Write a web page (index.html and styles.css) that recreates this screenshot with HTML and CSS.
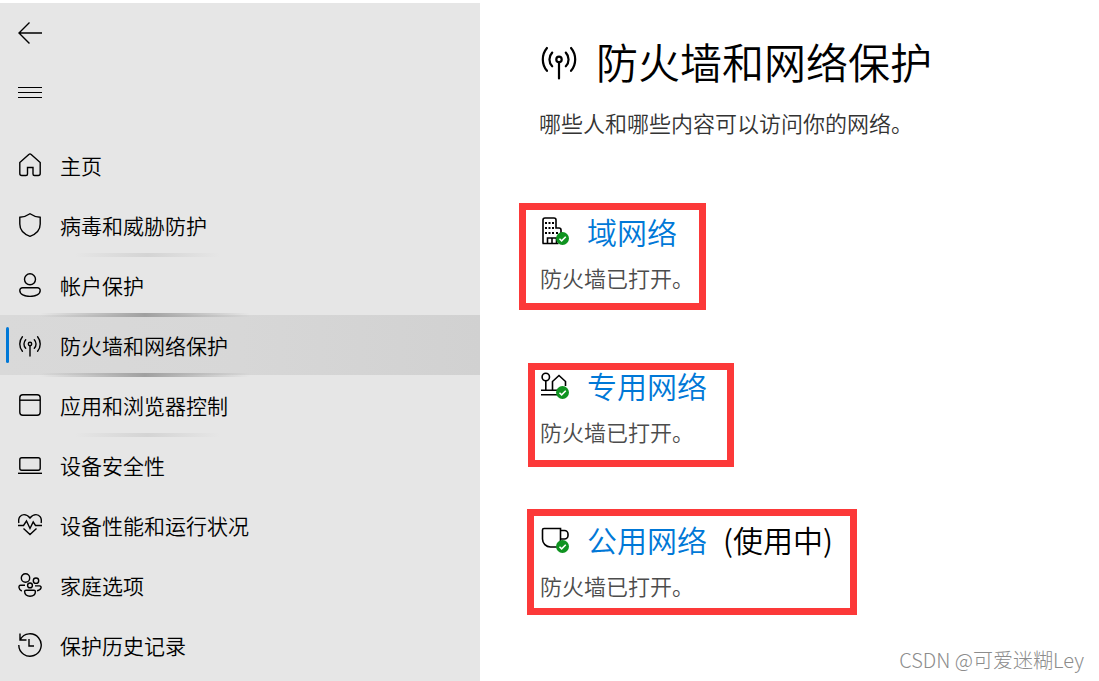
FILE: index.html
```html
<!DOCTYPE html>
<html lang="zh-CN">
<head>
    <meta charset="utf-8">
    <meta name="viewport" content="width=device-width, initial-scale=1.0">
    <title>防火墙和网络保护</title>
    <link rel="stylesheet" href="styles.css">
</head>
<body>
    <svg class="defs" width="0" height="0">
        <symbol id="antenna" viewBox="0 0 24 24">
            <circle cx="12" cy="11" r="1.700"/>
            <path stroke-linecap="round" d="M12 12.700V23M7.700 6.700a6.200 6.200 0 0 0 0 8.600M16.300 6.700a6.200 6.200 0 0 1 0 8.600M4.400 3.800a11.200 11.200 0 0 0 0 14.400M19.600 3.800a11.200 11.200 0 0 1 0 14.400"/>
        </symbol>
        <symbol id="check" viewBox="0 0 12 12">
            <circle cx="6" cy="6" r="6" fill="#0f9320" stroke="none"/>
            <path d="M3.200 6.200l2 2L9 4.300" stroke="#fff" stroke-width="1.400"/>
        </symbol>
    </svg>

    <div class="app">
        <aside class="sidebar">
            <button class="tool" type="button" aria-label="返回">
                <svg class="icon" viewBox="0 0 24 24"><path d="M24 12H1M11.500 1.500L1 12l10.500 10.500"/></svg>
            </button>
            <button class="tool" type="button" aria-label="菜单">
                <svg class="icon" viewBox="0 0 24 24"><path d="M0 6.500h24M0 11.500h24M0 16.500h24" stroke-width="1"/></svg>
            </button>

            <nav class="nav">
                <a class="nav-item" href="#">
                    <svg class="icon" viewBox="0 0 24 24"><path d="M1.800 9.500L10.800 1.400a1.800 1.800 0 0 1 2.400 0L22.200 9.500V20.500a2 2 0 0 1-2 2H16.500a1.500 1.500 0 0 1-1.500-1.500V14.500H9.500V21a1.500 1.500 0 0 1-1.500 1.500H3.800a2 2 0 0 1-2-2z"/></svg>
                    <span>主页</span>
                </a>
                <a class="nav-item faint" href="#">
                    <svg class="icon" viewBox="0 0 24 24"><path d="M12 .8C9.200 2.800 5.500 4 1.800 4.300V11c0 6 3.800 10 10.200 12.300C18.400 21 22.200 17 22.200 11V4.300C18.500 4 14.800 2.800 12 .8z"/></svg>
                    <span>病毒和威胁防护</span>
                </a>
                <a class="nav-item" href="#">
                    <svg class="icon" viewBox="0 0 24 24"><circle cx="12" cy="6.300" r="5.500"/><path d="M4.500 14.700h15a2.700 2.700 0 0 1 2.700 2.700c0 3.800-4.600 6-10.200 6S1.800 21.200 1.800 17.400a2.700 2.700 0 0 1 2.700-2.700z"/></svg>
                    <span>帐户保护</span>
                </a>
                <a class="nav-item active" href="#">
                    <svg class="icon"><use href="#antenna"/></svg>
                    <span>防火墙和网络保护</span>
                </a>
                <a class="nav-item faint" href="#">
                    <svg class="icon" viewBox="0 0 24 24"><rect x="1.800" y="1.800" width="20.400" height="20.400" rx="3"/><path d="M1.800 7.200h20.400"/></svg>
                    <span>应用和浏览器控制</span>
                </a>
                <a class="nav-item" href="#">
                    <svg class="icon" viewBox="0 0 24 24"><rect x="1.800" y="4.800" width="20.400" height="12.400" rx="2"/><path d="M0 20.300h24"/></svg>
                    <span>设备安全性</span>
                </a>
                <a class="nav-item" href="#">
                    <svg class="icon" viewBox="0 0 24 24"><path d="M.9 10C-.2 5 2.500 1.600 6 1.600c2.800 0 4.500 1.400 6 3.400 1.500-2 3.200-3.400 6-3.400 3.500 0 6.200 3.400 5.100 8.400M0 12.500h5.500l3-4.500 3.500 7.500 3.200-6.500 2.300 3.500H24M5.500 15.500L12 21.500l6.500-6"/></svg>
                    <span>设备性能和运行状况</span>
                </a>
                <a class="nav-item" href="#">
                    <svg class="icon" viewBox="0 0 24 24"><circle cx="7.500" cy="5" r="4.200"/><circle cx="18" cy="7.700" r="2.700"/><circle cx="12" cy="12.400" r="2.400"/><path d="M7 12.300H2.500C.3 12.300.3 16.500 3.800 18M17 12.900h4.500c2.600 0 2.200 4-2.500 4.800M8 17.200h8a1.400 1.400 0 0 1 1.400 1.400c0 2.800-2.200 4.600-5.400 4.600s-5.400-1.800-5.400-4.600A1.400 1.400 0 0 1 8 17.200z"/></svg>
                    <span>家庭选项</span>
                </a>
                <a class="nav-item" href="#">
                    <svg class="icon" viewBox="0 0 24 24"><path d="M2 .5V7h6.500M2.200 6.600A11.200 11.200 0 1 1 .8 12M11 6v7h5"/></svg>
                    <span>保护历史记录</span>
                </a>
            </nav>
        </aside>

        <main class="content">
            <header class="page-header">
                <h1><svg class="title-icon"><use href="#antenna"/></svg>防火墙和网络保护</h1>
                <p>哪些人和哪些内容可以访问你的网络。</p>
            </header>

            <section class="network domain">
                <h2>
                    <svg class="network-icon" viewBox="-1 0 29 28">
                        <path d="M2 26.500V3a2 2 0 0 1 2-2h9a2 2 0 0 1 2 2v8h3a2 2 0 0 1 2 2v4M1.500 26.500h16M6.500 26V21h9v5M11 21v5"/>
                        <path d="M4 6h2M7.500 6h2M11 6h2M4 11h2M7.500 11h2M11 11h2M4 16h2M7.500 16h2M11 16h2M15 16h2" stroke-width="2"/>
                        <use href="#check" x="15" y="15" width="13" height="13"/>
                    </svg>
                    <a href="#">域网络</a>
                </h2>
                <p>防火墙已打开。</p>
            </section>

            <section class="network private">
                <h2>
                    <svg class="network-icon" viewBox="-1 0 29 28">
                        <circle cx="4.800" cy="6" r="3.700"/>
                        <path d="M4.800 9.700V19M11.500 19v-8.500L18 4.500l6.500 6V15M0 19.200h17M0 23.700h17"/>
                        <use href="#check" x="15" y="15" width="13" height="13"/>
                    </svg>
                    <a href="#">专用网络</a>
                </h2>
                <p>防火墙已打开。</p>
            </section>

            <section class="network public">
                <h2>
                    <svg class="network-icon" viewBox="-1 0 29 28">
                        <path d="M16 22H9.500a8 8 0 0 1-8-8V5a1.500 1.500 0 0 1 1.500-1.500h16.500V16M19.500 5.500h4A3.500 3.500 0 0 1 27 9v1.500a3.500 3.500 0 0 1-3.500 3.500h-4"/>
                        <use href="#check" x="15" y="15" width="13" height="13"/>
                    </svg>
                    <a href="#">公用网络</a>
                    <span class="in-use">(使用中)</span>
                </h2>
                <p>防火墙已打开。</p>
            </section>

            <footer class="credit">CSDN @可爱迷糊Ley</footer>
        </main>
    </div>
</body>
</html>
```
FILE: styles.css
```css
* {
    box-sizing: border-box;
}

body {
    margin: 0;
    background-color: #fff;
    color: #000;
    font-family: "Noto Sans CJK SC", sans-serif;
    font-weight: 350;
}

h1, h2, p {
    margin: 0;
    font-weight: 350;
}

a {
    text-decoration: none;
}

svg {
    flex: none;
    fill: none;
    stroke: #000;
    stroke-width: 1.4;
}

.defs {
    position: absolute;
}

.app {
    display: flex;
    min-height: 100vh;
    padding-top: 3px;
}

/* sidebar */
.sidebar {
    flex: 0 0 480px;
    background-color: #e6e6e6;
}

.tool {
    display: flex;
    align-items: center;
    width: 60px;
    height: 60px;
    padding: 0 18px;
    border: none;
    background: none;
    cursor: pointer;
}

.icon {
    width: 24px;
    height: 24px;
}

.nav {
    margin-top: 12px;
}

.nav-item {
    position: relative;
    display: flex;
    align-items: center;
    gap: 18px;
    height: 60px;
    padding: 0 18px;
    color: #000;
    font-size: 21px;
}

.nav-item.active {
    background: linear-gradient(90deg, #d9d9d9, #d7d7d7 50%, #d1d1d1);
}

/* blue marker and the soft lines between items */
.nav-item.active span::before {
    content: "";
    position: absolute;
    left: 6px;
    top: 12px;
    width: 3px;
    height: 36px;
    border-radius: 2px;
    background-color: #0078d7;
}

.nav-item.active::before,
.nav-item.active::after,
.nav-item.faint::after {
    content: "";
    position: absolute;
    left: 40px;
    width: 210px;
    height: 4px;
    background: linear-gradient(90deg, transparent, #a0a0a0 50%, transparent);
}

.nav-item.active::before {
    top: -2px;
}

.nav-item.active::after,
.nav-item.faint::after {
    bottom: -2px;
}

.nav-item.faint::after {
    left: 75px;
    width: 145px;
    background: linear-gradient(90deg, transparent, #d4d4d4 50%, transparent);
}

/* content */
.content {
    flex: 1;
    display: flex;
    flex-direction: column;
    align-items: flex-start;
    padding: 28px 15px 6px 39px;
}

.page-header {
    padding-left: 20px;
    margin-bottom: 64px;
}

.page-header h1 {
    display: flex;
    align-items: center;
    gap: 17px;
    font-size: 42px;
    line-height: 60px;
}

.title-icon {
    width: 40px;
    height: 38px;
}

.page-header p {
    margin-top: 14px;
    color: #333;
    font-size: 22px;
    line-height: 34px;
}

.network {
    border: 7px solid #fc3939;
}

.network h2 {
    display: flex;
    align-items: center;
    font-size: 30px;
    line-height: 30px;
}

.network h2 a {
    margin-left: 18px;
    color: #0078d7;
}

.network p {
    margin-top: 14px;
    color: #4c4c4c;
    font-size: 22px;
    line-height: 34px;
}

.network-icon {
    width: 29px;
    height: 28px;
    stroke-width: 1.6;
}

.in-use {
    margin-left: 16px;
}

.domain {
    padding: 6px 5px 9px 14px;
}

.private {
    margin: 53px 0 42px 9px;
    padding: 0 20px 12px 5px;
}

.public {
    margin-left: 8px;
    padding: 8px 17px 6px 6px;
}

.credit {
    align-self: flex-end;
    margin-top: auto;
    color: #8c8c8c;
    font-size: 20px;
    font-weight: 300;
    line-height: 30px;
}
```
